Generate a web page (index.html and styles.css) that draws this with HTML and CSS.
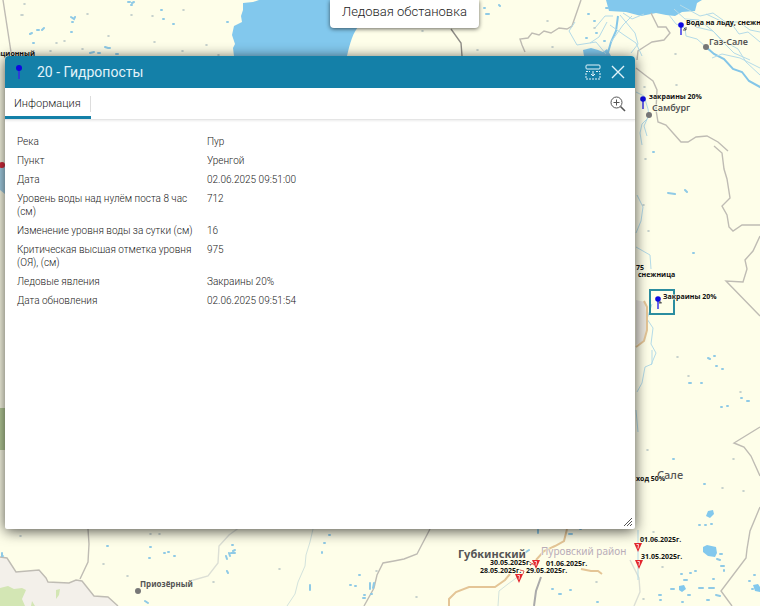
FILE: index.html
```html
<!DOCTYPE html>
<html lang="ru">
<head>
<meta charset="utf-8">
<meta name="viewport" content="width=device-width, initial-scale=1">
<title>Ледовая обстановка</title>
<link rel="stylesheet" href="styles.css">
</head>
<body>
<main class="viewer">
  <svg class="map" viewBox="0 0 760 606" preserveAspectRatio="xMidYMid slice" role="img" aria-label="Карта">
    <defs>
      <g id="post"><path d="M0 0v10" stroke="#3a35e8" stroke-width="1.5"/><circle r="2.8" fill="#0d08e0"/></g>
      <g id="alert"><path d="M-4-4h8L0 5z" fill="#e3262e"/><path d="M-1.5-2.5h2L0 1.5" fill="none" stroke="#fff" stroke-width=".8"/></g>
    </defs>

    <g class="land">
      <path fill="#f3f0ea" d="M0 557l7 1 9 14 23-2 7 8 2 4 21 1 7-3 6 1 12 15 14 1 10 9H0z"/>
      <path fill="#d3e6b4" d="M0 588l8-2 6 3 8-1 4 2-4 9 3 7H0zM56 590l4-1-1 6-3 4zM32 601l3 5h-4z"/>
      <path fill="#b9cf9b" d="M0 408h5v42H0z"/>
      <path fill="#a8d3e8" d="M0 164h5v30l-5-4z"/>
      <path fill="#e9e5dc" d="M636 300l9 2 2 22-3 17-8 4z"/>
    </g>

    <g class="lake">
      <path d="M243 3l10-1 6-2h100v26c-6 6-9 17-12 30H234l-1-8 2-4-3-9 2-9 8-4-1-6 2-6z"/>
      <path d="M606 0h96l-5 3-2 8-13 1-7 4-9-1-10-2-15 3-15-4-17-1z"/>
      <path d="M583 50l8-2 7 2 5 2 4-3 4 7h-27z"/>
      <path d="M703 547l4-2 9 2 1 6-2 4-7-1-5-4zM708 511l5-1 1 4-4 4-4-2zM679 586l5-1 2 4-4 3-3-2zM753 585l5-1 2 3v5l-5-1z"/>
    </g>

    <g class="border">
      <path d="M3 0l8 52"/><path class="dark" d="M451 29l10 14 1 13"/>
      <path d="M581 0l-9 26-5 3-8-1-8 5-7-2-5 4-7-2-4 5-8 1 2 6 3 7"/>
      <path d="M651 13l7 14 8 0 4 6-6 7-12 2-8 5-6 4-1 9M636 68l9 7 8 6 4 9-1 20 2 12 8 3 7 8 8 9 7 0 8-5 11-1 11 6 10 9"/>
      <path d="M714 146l8 7 2 16 3 10 3 19-8 8 5 9 2 12 4 4 9-6h18M760 236l-7 15-8 9 2 9-4 13-17-1 34 35"/>
      <path d="M760 427l-26 16 10 4 7 9 9 20M760 507l-10 24-3 18-1 9-25 33 11 15"/>
      <path d="M88 529l1 15-1 18-8 17M430 529l-13 25-13 5-10 2-11 2-6 12-3 13-10 18"/>
      <path d="M0 557l7 1 9 14 23-2 7 8 2 4 21 1 7-3 6 1 12 15 14 1 10 9"/>
    </g>
    <path class="border faded" d="M240 527l-11 8-10 11-1 17-10 13-18 5M630 560l9 18 1 14-6 14"/>

    <g class="stream">
      <path class="wide" d="M618 16l-2 15-5 11-4 14"/>
      <path d="M611 42l12-17 9-9M610 25l14 10 12 8 6 13M575 22l-6 9 8 14 19-3 10 12M595 28l10-12 8 0M590 43l9-6 8-15M620 15l15 18 3 11-7 9M623 13l9 6 12-5"/>
      <path d="M706 47l8 7 10 5 9 10 9 3 7 9 22 12" class="wide"/>
      <path d="M669 15l7 9 9 4 1 8 11 3 9 8M674 9l11 10 14 1 14 11 9 9 16 9 8 13 14 13M680 5l20 11 13-3 14 10 9 2M690 19l6 8 17 4 10 11 11 11 16 7M706 14l17 8 16 0 11 8 10 2M729 20l10 14 9-2 12 10M712 58l10-4 18 4 20 10"/>
      <path d="M636 92l8 4 4 13 1 8-7 7-2 9 2 12M648 117l-4 9 3 10M637 195l6 12-2 14-5 12M636 247l14 8 1 14M652 304l-5 15 6 9-2 16 5 9-5 12M652 350v14l-7 3-3 16-5 9M636 410l2 22M638 530v50"/>
      <path class="faint" d="M313 529l-3 13-4 13-1 11-7 16-3 12-8 12M519 576l-11 8-9 7-1 15"/>
    </g>
    <path class="ponds" d="M21 15h2M24 4h1M87 14h1M56 43h1M64 41h1M50 51h1M82 49h1M131 15h1M152 16h1M154 42h1M182 51h1M183 10h1M218 55h1M108 36h1M206 45h1M422 31h1M477 50h1M547 21h1M552 47h1M594 28h1M675 54h1M676 85h1M644 87h1M645 159h1M648 231h1M643 205h1M677 357h1M688 376h1M740 392h1M647 450h1M722 488h1M743 491h1M733 459h1M150 534h1M159 534h1M103 564h1M127 576h1M20 536h1M213 582h1M279 569h1M376 571h1M416 597h1M662 567h1M653 532h1M643 599h1M596 582h1"/>
    <path class="lakes" d="M30 34l2-1M37 30h2M42 30l2-2M33 43h1M71 17l3 2 1-2M72 22h1M71 32h1M105 47l3 1 2 0M90 53l4-1M98 53h2M116 54h2M128 2h2M132 3l2-1M131 5h1M161 10h1M163 19h1M173 24h1M227 22h1M486 14h3M499 5l1 1M484 8h1M594 21h1M588 14h1M606 8h2M596 33h1M586 38h1M604 41h1M668 193l7 1M685 190l2 2M653 152h1M693 253h1M708 358l2 1M716 366h1M714 356h1M722 369h1M689 383h2M701 383h1M721 407h1M727 406h1M741 398h1M747 401h2M673 459h1M704 484h1M699 525h1M705 525h1M711 524h1M717 559l3 1M721 566h3M724 570v1M690 573h1M695 571h1M681 574h1M684 580h3M671 589h3M659 595h2M660 600h1M699 588h4M709 588h5M716 595l4 1M707 600h2M682 602h1M688 595h2M713 579h1M720 554h2M749 581h1M754 575h1M752 589h1M150 547h1M164 553h1M168 552h1M174 556h1M107 546h1M149 558h1M229 553l1 3M233 551l2-1M231 553h4M226 556l1 3M232 545h1M227 571l1 2M324 543h1M329 535h1M322 552v1M310 585v5M350 585h1M359 575h1M355 586h1M370 583v6M374 583l-1 5M364 595h1M363 598h2M371 594h1M145 601l3 2M538 530v3M562 528h2M569 534h3M580 529h1M526 552l3-2M552 589h1M559 594h2M570 590h1M597 602h1M2 553v3h1"/>
    <g class="road">
      <path d="M644 301l3 6v23l-3 11-8 6"/><path d="M449 606v-7l7-7 13-5h26l10-7 5-6M536 560l8-9 11-5 9-5 3-12M581 569l10 2 7 0 4 3"/><path class="gray" d="M541 577l-5 14-2 15"/>
    </g>

    <g class="town"><circle cx="706" cy="47" r="3"/><circle cx="649" cy="115" r="3"/><circle cx="138" cy="591" r="3"/></g>
    <rect class="selection" x="650" y="290" width="24" height="24"/>
    <use href="#post" x="681" y="25"/><use href="#post" x="643" y="99"/><use href="#post" x="658" y="299"/>
    <path d="M684 28l2 2m0-3v3h-3M659 302l3 1m-2-2v3" stroke="#555" fill="none"/>
    <use href="#alert" x="638" y="547"/><use href="#alert" x="639" y="564"/><use href="#alert" x="536" y="564"/><use href="#alert" x="519" y="578"/>
    <path d="M528 561l6 4M530 566l4-4M520 570l4 1-1 3" stroke="#df5b57" fill="none"/>
    <circle cx="2" cy="165" r="3" fill="#d92b3c"/>

    <g class="places">
      <text x="709" y="45" class="halfbold">Газ-Сале</text>
      <text x="652" y="111" class="halfbold">Самбург</text>
      <text x="458" y="558" class="city">Губкинский</text>
      <text x="541" y="555" class="district">Пуровский район</text>
      <text x="140" y="587" class="village">Приозёрный</text>
      <text x="657" y="479" class="sale">Сале</text>
      <text x="636" y="270" class="mark">75</text>
    </g>
    <g class="mark">
      <text x="686" y="25">Вода на льду, снежница</text>
      <text x="649" y="99">закраины 20%</text>
      <text x="663" y="299">Закраины 20%</text>
      <text x="638" y="277">снежница</text>
      <text x="636" y="481">ход 50%</text>
      <text x="640" y="542">01.06.2025г.</text>
      <text x="641" y="559">31.05.2025г.</text>
      <text x="546" y="566">01.06.2025г.</text>
      <text x="490" y="565">30.05.2025г.</text>
      <text x="480" y="573">28.05.2025г.</text>
      <text x="526" y="573">29.05.2025г.</text>
      <text x="35" y="56" text-anchor="end">ационный</text>
    </g>
  </svg>

  <h1 class="map-title">Ледовая обстановка</h1>

  <section class="window" aria-labelledby="window-title">
    <header class="window-bar">
      <svg class="pin" viewBox="0 0 8 16" aria-hidden="true"><path d="M4 4v11" stroke="#3430e0" stroke-width="1.6"/><circle cx="4" cy="4" r="3" fill="#0d08e0"/></svg>
      <h2 id="window-title">20 - Гидропосты</h2>
      <button type="button" aria-label="Закрепить снизу">
        <svg viewBox="0 0 16 16" aria-hidden="true"><rect x="1" y="1" width="14" height="4" rx="1"/><path d="M1 7.500h4M11 7.500h4M1 9v6h14V9" stroke-dasharray="2 1"/><path d="M8 7v5M6 10l2 2 2-2"/></svg>
      </button>
      <button type="button" aria-label="Закрыть">
        <svg viewBox="0 0 16 16" aria-hidden="true"><path d="M2 2l12 12M14 2L2 14" stroke-width="1.400"/></svg>
      </button>
    </header>
    <div class="toolbar">
      <button type="button" class="tab" aria-current="true">Информация</button>
      <button type="button" class="zoom" aria-label="Приблизить">
        <svg viewBox="0 0 16 16" aria-hidden="true"><circle cx="6.500" cy="6.500" r="5.500"/><path d="M6.500 3.500v6M3.500 6.500h6"/><path d="M10.500 10.500l4.500 4.500" stroke-width="1.600"/></svg>
      </button>
    </div>
    <div class="content">
      <table>
        <tbody>
          <tr><th scope="row">Река</th><td>Пур</td></tr>
          <tr><th scope="row">Пункт</th><td>Уренгой</td></tr>
          <tr><th scope="row">Дата</th><td>02.06.2025 09:51:00</td></tr>
          <tr><th scope="row">Уровень воды над нулём поста 8 час (см)</th><td>712</td></tr>
          <tr><th scope="row">Изменение уровня воды за сутки (см)</th><td>16</td></tr>
          <tr><th scope="row">Критическая высшая отметка уровня (ОЯ), (см)</th><td>975</td></tr>
          <tr><th scope="row">Ледовые явления</th><td>Закраины 20%</td></tr>
          <tr><th scope="row">Дата обновления</th><td>02.06.2025 09:51:54</td></tr>
        </tbody>
      </table>
    </div>
    <svg class="grip" viewBox="0 0 10 10" aria-hidden="true"><path d="M1 9l8-8M4 9l5-5M7 9l2-2"/></svg>
  </section>
</main>
</body>
</html>
```
FILE: styles.css
```css
* { box-sizing: border-box; }
body { margin: 0; font-family: Roboto, "Liberation Sans", sans-serif; color: #222; }
h1, h2 { margin: 0; font-weight: 300; }
button { border: 0; padding: 0; background: none; font: inherit; color: inherit; cursor: pointer; }

.viewer {
  position: relative;
  display: flex;
  flex-direction: column;
  min-height: 100vh;
  overflow: hidden;
  background: #fefee9;
}

.map { position: absolute; inset: 0; width: 100%; height: 100%; }
.lake { fill: #82c8ed; }
.border { fill: none; stroke: #bfbcb4; stroke-width: 1.4; }
.border .dark { stroke: #8f8d87; }
.faded { stroke: #dcdfd5; }
.stream { fill: none; stroke: #b4dbe8; stroke-width: 1; }
.stream .wide { stroke: #84c6e8; stroke-width: 2; }
.stream .faint { stroke: #d3e3dd; }
.lakes { fill: none; stroke: #8fcae6; stroke-width: 2; stroke-linecap: round; }
.ponds { fill: none; stroke: #b5c4c4; stroke-width: 1.6; stroke-linecap: round; }
.road { fill: none; stroke: #e4c596; stroke-width: 2; }
.road .gray { stroke: #aaa; }
.town { fill: #777; }
.selection { fill: none; stroke: #2b8da0; stroke-width: 2; }

.places { font-family: "Noto Sans", sans-serif; fill: #555; paint-order: stroke; stroke: #fefee9; stroke-width: 1px; }
.halfbold { font-size: 9px; font-weight: 600; }
.city { font-size: 11px; font-weight: 700; }
.district { font-size: 10px; fill: #b9adb9; }
.village { font-size: 8px; font-weight: 700; }
.sale { font-size: 11px; font-weight: 500; }
.mark { font-family: "Open Sans", "Noto Sans", sans-serif; font-size: 7px; font-weight: 700; fill: #111; paint-order: stroke; stroke: #fefee9; stroke-width: 1px; }

.map-title {
  position: relative;
  align-self: flex-start;
  margin-left: 330px;
  padding: 2px 12px 6px;
  border-radius: 0 0 4px 4px;
  background: #fff;
  box-shadow: 0 1px 4px rgba(0, 0, 0, .6);
  font-size: 13px;
  line-height: 20px;
}

.window {
  position: relative;
  flex: 1;
  display: flex;
  flex-direction: column;
  margin: 28px 125px 77px 5px;
  border-radius: 4px 4px 2px 2px;
  background: #fff;
  box-shadow: 0 2px 14px rgba(0, 0, 0, .7);
}

.window-bar {
  display: flex;
  align-items: center;
  gap: 9px;
  height: 32px;
  padding: 0 9px 0 10px;
  border-radius: 4px 4px 0 0;
  background: #1480a8;
  color: #e2f3fa;
}
.window-bar h2 { flex: 1; margin-left: 5px; font-size: 14px; line-height: 20px; font-weight: 400; }
.pin { width: 8px; height: 16px; }
.window-bar button, .zoom { width: 16px; height: 16px; }
.window-bar button svg, .zoom svg { display: block; width: 16px; height: 16px; fill: none; stroke: currentColor; }

.toolbar {
  display: flex;
  justify-content: space-between;
  align-items: center;
  height: 32px;
  padding-right: 9px;
  border-bottom: 1px solid #e5e5e5;
  box-shadow: 0 1px 2px rgba(0, 0, 0, .08);
}
.tab {
  position: relative;
  align-self: stretch;
  padding: 3px 10px 0 9px;
  border-bottom: 3px solid #1480a8;
  font-size: 11px;
  font-weight: 300;
  line-height: 25px;
}
.tab::after { content: ""; position: absolute; top: 8px; right: 0; bottom: 4px; width: 1px; background: #ddd; }
.zoom { color: #555; }

.content { flex: 1; padding: 12px; }
table { width: 100%; table-layout: fixed; border-collapse: collapse; font-size: 10px; line-height: 13px; }
th, td { padding: 3px 0; vertical-align: top; text-align: left; font-weight: 300; }
th { width: 190px; padding-right: 8px; }
.grip { position: absolute; right: 2px; bottom: 2px; width: 10px; height: 10px; fill: none; stroke: #555; }
```
